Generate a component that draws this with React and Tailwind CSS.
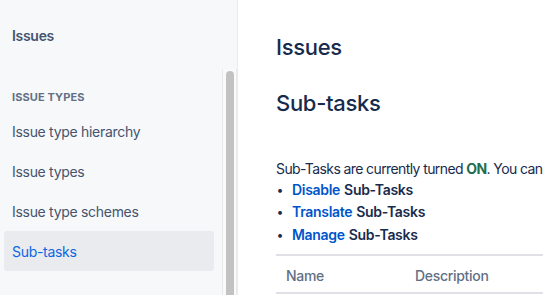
import React from 'react';

const navItems = ['Issue type hierarchy', 'Issue types', 'Issue type schemes', 'Sub-tasks'];

const Sidebar = () => (
    <aside className="w-[238px] shrink-0 h-full bg-[#f7f8f9] border-r border-[#ebecf0] flex flex-col">
        <div className="h-[69px] px-3 pt-[26px]">
            <h2 className="text-[14px] leading-5 font-semibold text-[#44546f]">Issues</h2>
        </div>
        <div className="flex flex-1 min-h-0">
            {/* nav list */}
            <nav className="flex-1 pl-1 pr-2 pt-[20px] overflow-hidden">
                <div className="px-2 h-[16px] mb-[6px] text-[11px] leading-4 font-bold tracking-[0.01em] text-[#626f86] uppercase">
                    Issue types
                </div>
                {navItems.map((item) => (
                    <a
                        key={item}
                        href="#"
                        className={
                            item === 'Sub-tasks'
                                ? 'flex items-center h-10 px-2 rounded-[3px] bg-[#eaebee] text-[14px] text-[#0c66e4]'
                                : 'flex items-center h-10 px-2 rounded-[3px] text-[14px] text-[#44546f]'
                        }
                    >
                        {item}
                    </a>
                ))}
            </nav>
            {/* scrollbar */}
            <div className="w-[15px] border-l border-r border-[#e9e9e9] bg-[#fafafa] pt-[2px]">
                <div className="ml-[3px] w-[8px] h-full bg-[#c2c2c2] rounded-t-full" />
            </div>
        </div>
    </aside>
);

const Bullet = ({ link, mt }) => (
    <li className={`flex items-center ${mt}`}>
        <span className="w-[16px] pl-[1px] text-[12px]">•</span>
        <a href="#" className="text-[#0055cc]">{link}</a>
        <span className="ml-1">Sub-Tasks</span>
    </li>
);

const App = () => {
    return (
        <div
            className="flex w-[543px] h-[295px] overflow-hidden bg-white tracking-[-0.3px]"
            style={{ fontFamily: 'Inter, "Noto Sans", sans-serif' }}
        >
            <Sidebar />
            <main className="flex-1 min-w-0 pl-[38px] overflow-hidden text-[#172b4d]">
                <h1 className="mt-[33px] text-[22px] leading-7 font-medium whitespace-nowrap">Issues</h1>
                <h2 className="mt-[28px] text-[22px] leading-7 font-medium whitespace-nowrap">Sub-tasks</h2>
                <p className="mt-[42px] text-[14px] leading-5 tracking-[-0.6px] whitespace-nowrap">
                    Sub-Tasks are currently turned <span className="font-bold text-[#216e4e]">ON</span>. You can
                </p>
                <ul className="text-[14px] leading-5 font-semibold whitespace-nowrap">
                    <Bullet link="Disable" mt="mt-px" />
                    <Bullet link="Translate" mt="mt-[2px]" />
                    <Bullet link="Manage" mt="mt-[3px]" />
                </ul>
                <table className="mt-[9px] w-[400px] table-fixed border-collapse">
                    <thead>
                        <tr className="border-t-2 border-b-2 border-[#dfe1e6]">
                            <th className="w-[139px] pl-[10px] pt-[10px] pb-[6px] text-left text-[14px] leading-5 font-medium text-[#626f86]">
                                Name
                            </th>
                            <th className="pt-[10px] pb-[6px] text-left text-[14px] leading-5 font-medium text-[#626f86]">
                                Description
                            </th>
                        </tr>
                    </thead>
                </table>
            </main>
        </div>
    );
};

export default App;
